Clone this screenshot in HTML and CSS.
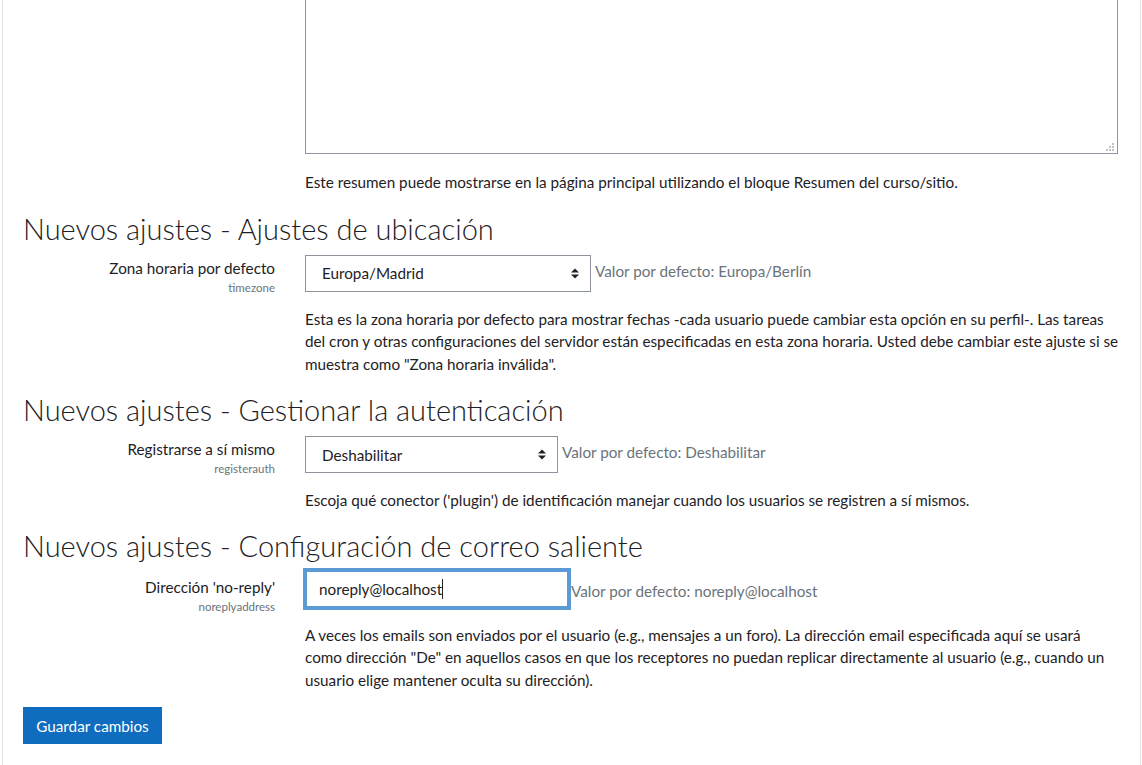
FILE: index.html
```html
<!DOCTYPE html>
<html lang="es">
<head>
<meta charset="utf-8">
<title>Ajustes</title>
<link rel="stylesheet" href="styles.css">
</head>
<body>
<div class="page">
  <div class="row row-top">
    <div class="label-col"></div>
    <div class="control-col">
      <div class="textarea-wrap">
        <div class="textarea"></div>
        <span class="grip">
          <svg width="9" height="9" viewBox="0 0 9 9"><g fill="#c4c4c4"><rect x="6" y="0" width="2" height="2"/><rect x="3" y="3" width="2" height="2"/><rect x="6" y="3" width="2" height="2"/><rect x="0" y="6" width="2" height="2"/><rect x="3" y="6" width="2" height="2"/><rect x="6" y="6" width="2" height="2"/></g></svg>
        </span>
      </div>
      <p class="desc desc-first">Este resumen puede mostrarse en la página principal utilizando el bloque Resumen del curso/sitio.</p>
    </div>
  </div>

  <h3 class="section section-first">Nuevos ajustes - Ajustes de ubicación</h3>
  <div class="row">
    <div class="label-col">
      <div class="label">Zona horaria por defecto</div>
      <div class="setting-name">timezone</div>
    </div>
    <div class="control-col">
      <div class="control-line line-tz">
        <div class="select select-tz"><span>Europa/Madrid</span><svg class="arrows" width="8" height="11" viewBox="0 0 8 11"><path d="M0 4.5 L4 0.5 L8 4.5Z M0 6.5 L4 10.5 L8 6.5Z" fill="#1d2125"/></svg></div>
        <span class="default">Valor por defecto: Europa/Berlín</span>
      </div>
      <p class="desc desc-wide">Esta es la zona horaria por defecto para mostrar fechas -cada usuario puede cambiar esta opción en su perfil-. Las tareas del cron y otras configuraciones del servidor están especificadas en esta zona horaria. Usted debe cambiar este ajuste si se muestra como "Zona horaria inválida".</p>
    </div>
  </div>

  <h3 class="section section-auth">Nuevos ajustes - Gestionar la autenticación</h3>
  <div class="row">
    <div class="label-col">
      <div class="label">Registrarse a sí mismo</div>
      <div class="setting-name">registerauth</div>
    </div>
    <div class="control-col">
      <div class="control-line line-auth">
        <div class="select select-auth"><span>Deshabilitar</span><svg class="arrows" width="8" height="11" viewBox="0 0 8 11"><path d="M0 4.5 L4 0.5 L8 4.5Z M0 6.5 L4 10.5 L8 6.5Z" fill="#1d2125"/></svg></div>
        <span class="default">Valor por defecto: Deshabilitar</span>
      </div>
      <p class="desc">Escoja qué conector ('plugin') de identificación manejar cuando los usuarios se registren a sí mismos.</p>
    </div>
  </div>

  <h3 class="section">Nuevos ajustes - Configuración de correo saliente</h3>
  <div class="row">
    <div class="label-col">
      <div class="label label-input">Dirección 'no-reply'</div>
      <div class="setting-name">noreplyaddress</div>
    </div>
    <div class="control-col">
      <div class="control-line line-mail">
        <div class="input"><span>noreply@localhost</span><span class="caret"></span></div>
        <span class="default default-input">Valor por defecto: noreply@localhost</span>
      </div>
      <p class="desc">A veces los emails son enviados por el usuario (e.g., mensajes a un foro). La dirección email especificada aquí se usará como dirección "De" en aquellos casos en que los receptores no puedan replicar directamente al usuario (e.g., cuando un usuario elige mantener oculta su dirección).</p>
    </div>
  </div>

  <div class="actions">
    <button class="btn" type="button">Guardar cambios</button>
  </div>
</div>
</body>
</html>
```

FILE: styles.css
```css
html, body {
  margin: 0;
  padding: 0;
  background: #ffffff;
}
body {
  font-family: "Lato", "Open Sans", "Liberation Sans", sans-serif;
  font-size: 15.25px;
  color: #1d2125;
  overflow: hidden;
  height: 765px;
}
.page {
  margin-left: 2px;
  width: 1139px;
  border-left: 1px solid #dee2e6;
  border-right: 1px solid #dee2e6;
  padding: 0 22px 40px 20px;
  box-sizing: border-box;
  min-height: 765px;
}
.row {
  display: grid;
  grid-template-columns: 252px 1fr;
  column-gap: 30px;
}
.row-top {
  margin-top: -2px;
}
.label-col {
  text-align: right;
}
.label {
  line-height: 22px;
  padding-top: 2px;
}
.label-input {
  padding-top: 4px;
}
.setting-name {
  font-size: 11.5px;
  line-height: 14px;
  color: #6a737b;
  margin-top: 2px;
}
.textarea-wrap {
  position: relative;
}
.textarea {
  height: 156px;
  border: 1px solid #8f959e;
  box-sizing: border-box;
}
.grip {
  position: absolute;
  right: 3px;
  bottom: 2px;
  line-height: 0;
}
.desc {
  margin: 0;
  line-height: 22.5px;
}
.desc-first {
  margin-top: 17px;
}
.desc-wide {
  margin-right: -6px;
}
.section {
  font-weight: 300;
  font-size: 29px;
  line-height: 34px;
  margin: 17px 0 9px 0;
}
.section-first {
  margin-top: 18px;
}
.section-auth {
  margin-top: 18px;
}
.control-line {
  display: flex;
  align-items: center;
}
.line-tz { margin-bottom: 16px; }
.line-auth { margin-bottom: 16px; }
.line-mail { margin-bottom: 14px; }
.select {
  display: flex;
  align-items: center;
  justify-content: space-between;
  height: 37px;
  border: 1px solid #8f959e;
  box-sizing: border-box;
  padding: 0 11px 0 16px;
}
.select-tz { width: 286px; }
.select-auth { width: 253px; }
.arrows { display: block; }
.default {
  color: #6a737b;
  margin-left: 4px;
  margin-top: -5px;
}
.input {
  display: flex;
  align-items: center;
  width: 262px;
  height: 36px;
  margin: -1px 0 3px 1px;
  border: 1px solid #5b9bd5;
  box-shadow: 0 0 0 3px #5b9bd5;
  box-sizing: border-box;
  padding: 0 12px;
}
.caret {
  display: inline-block;
  width: 1px;
  height: 20px;
  background: #1d2125;
}
.default-input {
  margin-left: 3px;
  margin-top: 0;
}
.actions {
  margin-top: 16px;
}
.btn {
  font-family: inherit;
  font-size: 15.25px;
  color: #ffffff;
  background: #0f6cbf;
  border: 1px solid #0f6cbf;
  padding: 0 12px;
  height: 37px;
  width: 139px;
  border-radius: 0;
}
```
